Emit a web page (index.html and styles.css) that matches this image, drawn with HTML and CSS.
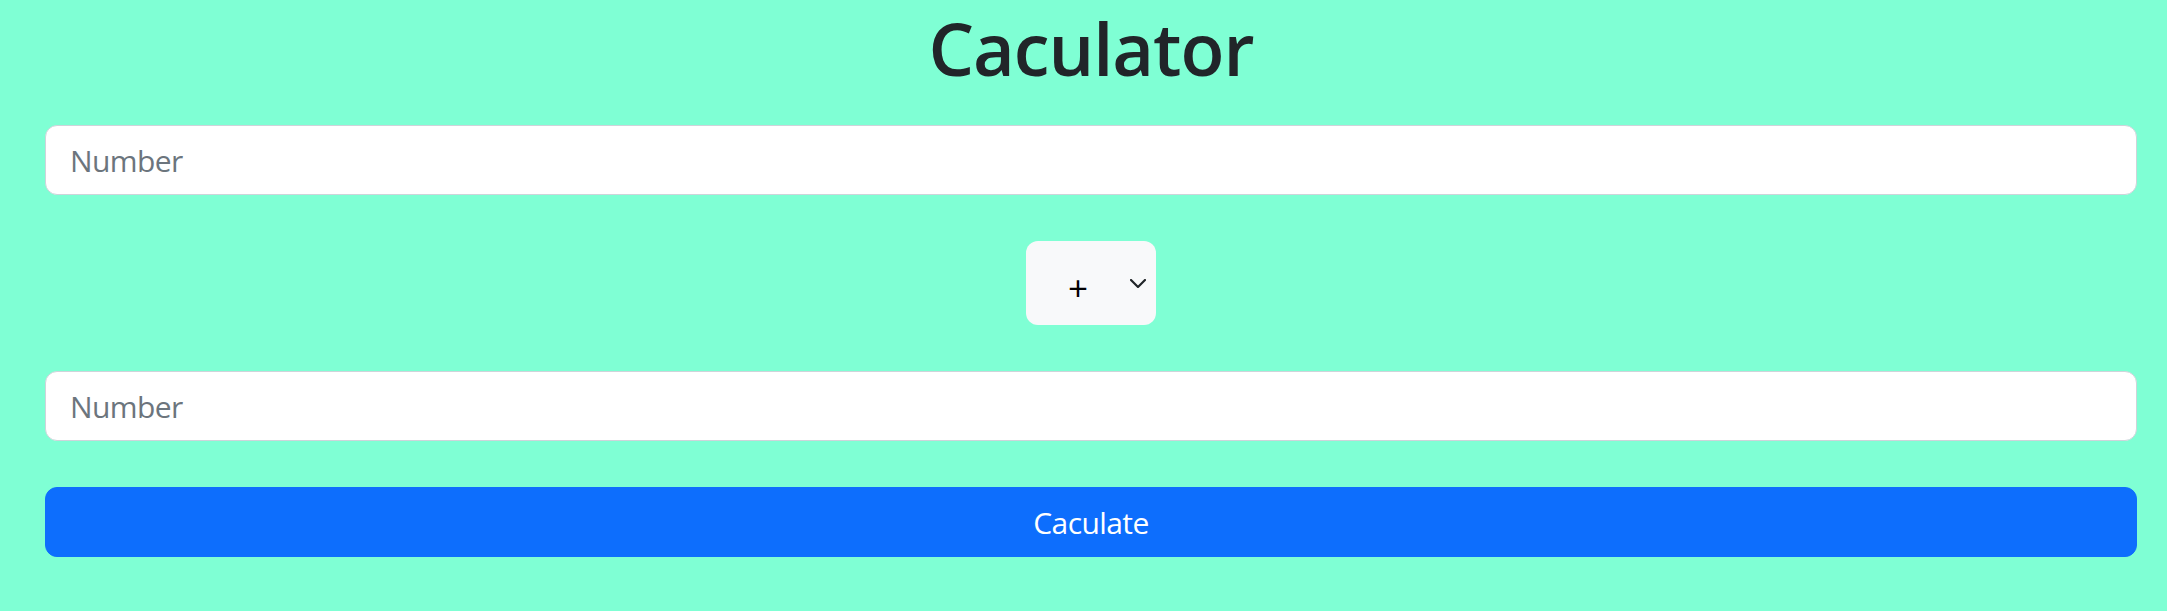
FILE: index.html
```html
<!DOCTYPE html>
<html lang="en">
<head>
<meta charset="utf-8">
<title>Caculator</title>
<link rel="stylesheet" href="styles.css">
</head>
<body>
<main class="page">
  <h1 class="title">Caculator</h1>
  <form class="calc">
    <input class="field" type="number" placeholder="Number">
    <div class="op-wrap">
      <select class="op">
        <option>+</option>
        <option>-</option>
        <option>*</option>
        <option>/</option>
      </select>
      <svg class="op-arrow" width="16" height="9" viewBox="0 0 16 9" aria-hidden="true">
        <polyline points="1,1 8,8 15,1" fill="none" stroke="#212529" stroke-width="2.2" stroke-linecap="round" stroke-linejoin="round"/>
      </svg>
    </div>
    <input class="field" type="number" placeholder="Number">
    <button class="submit" type="button">Caculate</button>
  </form>
</main>
</body>
</html>
```

FILE: styles.css
```css
html, body {
  margin: 0;
  padding: 0;
}
body {
  background: #7fffd4;
  font-family: "Open Sans", "Noto Sans", sans-serif;
  color: #212529;
}
.page {
  padding: 5px 30px 0 45px;
}
.title {
  margin: 0 0 34px;
  text-align: center;
  font-size: 72px;
  font-weight: 600;
  line-height: 1.2;
  letter-spacing: -1px;
  color: #212529;
}
.calc {
  display: flex;
  flex-direction: column;
  gap: 46px;
}
.field {
  box-sizing: border-box;
  height: 70px;
  width: 100%;
  padding: 0 24px;
  border: 1px solid #ced4da;
  border-radius: 12px;
  background: #fff;
  font-family: inherit;
  font-size: 30px;
  letter-spacing: -0.6px;
  color: #212529;
  outline: none;
}
.field::placeholder {
  color: #6c757d;
}
.op-wrap {
  position: relative;
  align-self: center;
  width: 130px;
  height: 84px;
}
.op {
  appearance: none;
  -webkit-appearance: none;
  box-sizing: border-box;
  width: 130px;
  height: 84px;
  padding: 8px 0 0 42px;
  border: none;
  border-radius: 12px;
  background: #f8f9fa;
  font-family: inherit;
  font-size: 35px;
  color: #000;
  outline: none;
}
.op-arrow {
  position: absolute;
  right: 10px;
  top: 38px;
  pointer-events: none;
}
.submit {
  box-sizing: border-box;
  height: 70px;
  width: 100%;
  border: 1px solid #0d6efd;
  border-radius: 12px;
  background: #0d6efd;
  color: #fff;
  font-family: inherit;
  font-size: 30px;
  letter-spacing: -0.6px;
  cursor: pointer;
}
```
